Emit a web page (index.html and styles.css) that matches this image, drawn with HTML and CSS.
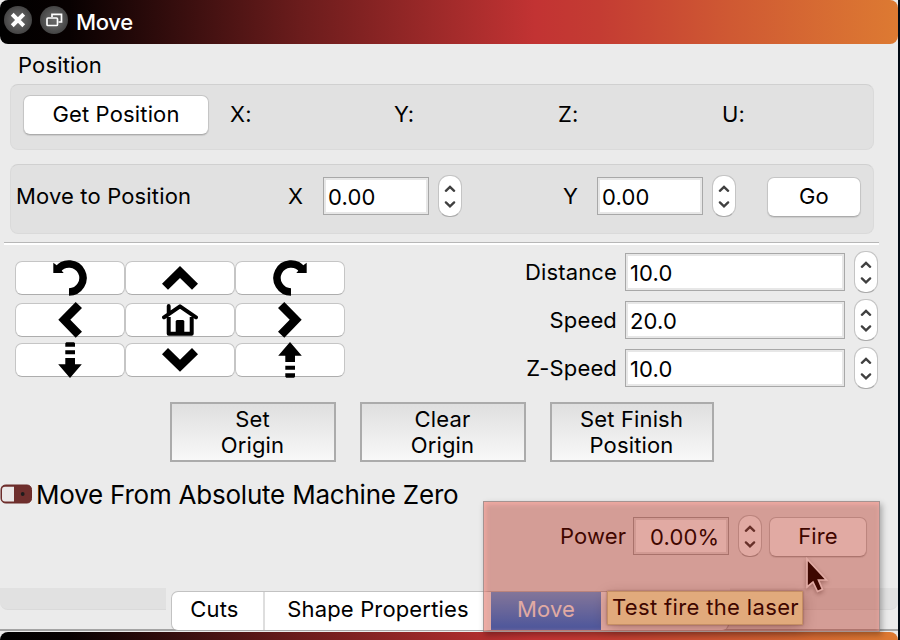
FILE: index.html
```html
<!DOCTYPE html>
<html lang="en">
<head>
<meta charset="utf-8">
<title>Move</title>
<link rel="stylesheet" href="styles.css">
</head>
<body>
<svg class="defs" width="0" height="0">
  <symbol id="spin" viewBox="0 0 24 42"><path d="M7.500 15.300 L12 11 L16.500 15.300 M7.500 28 L12 32.300 L16.500 28" fill="none" stroke="#404040" stroke-width="2.600" stroke-linecap="round" stroke-linejoin="miter"/></symbol>
</svg>
<div class="window">
  <header class="titlebar">
    <span class="round"><svg width="28" height="28" viewBox="0 0 28 28"><path d="M9 9 L19 19 M19 9 L9 19" stroke="#fff" stroke-width="4.600" stroke-linecap="square" transform="translate(1.800 1.800) scale(.87)"/></svg></span>
    <span class="round"><svg width="28" height="28" viewBox="0 0 28 28" fill="none" stroke="#fff" stroke-width="1.700"><path d="M12 11 V8.300 H21.500 V16 H18.500"/><rect x="7" y="12" width="10.500" height="7.500" rx="1"/></svg></span>
    <h1 class="title">Move</h1>
  </header>

  <main class="content">
    <h2 class="section-label">Position</h2>
    <section class="group readout">
      <button class="btn get">Get Position</button>
      <span class="axis">X:</span><span class="axis">Y:</span><span class="axis">Z:</span><span class="axis">U:</span>
    </section>
    <section class="group goto">
      <span class="goto-label">Move to Position</span>
      <span class="goto-x">X</span>
      <span class="field short">0.00</span>
      <svg class="spin"><use href="#spin"/></svg>
      <span class="goto-y">Y</span>
      <span class="field short">0.00</span>
      <svg class="spin"><use href="#spin"/></svg>
      <button class="btn go">Go</button>
    </section>
    <div class="divider"></div>

    <section class="jog">
      <div class="pad">
        <button class="key"><svg viewBox="0 0 36 36"><path d="M17 32 A14 14 0 1 0 5.700 9.700" fill="none" stroke="#000" stroke-width="7.500"/><path d="M1.300 2.700 L5 5.500 L11.700 13 H1.300Z"/></svg></button>
        <button class="key"><svg viewBox="0 0 36 36"><path d="M18 6 L36 23.700 L30 29.700 L18 18 L6 29.700 L0 23.700Z"/></svg></button>
        <button class="key"><svg viewBox="0 0 36 36"><path d="M19 32 A14 14 0 1 1 30.300 9.700" fill="none" stroke="#000" stroke-width="7.500"/><path d="M34.700 2.700 L31 5.500 L24.300 13 H34.700Z"/></svg></button>
        <button class="key"><svg viewBox="0 0 36 36"><path d="M6.300 17.800 L23.700 0 L30 6 L18.300 17.800 L30 29.700 L23.700 35.700Z"/></svg></button>
        <button class="key"><svg viewBox="0 0 36 36"><path d="M6.700 15 V31.700 H29.700 V15" fill="none" stroke="#000" stroke-width="4" stroke-linejoin="round"/><path d="M2 15.300 L18 4.300 L34 15.300 M6.700 12 V4" fill="none" stroke="#000" stroke-width="3.900" stroke-linecap="round" stroke-linejoin="round"/><path d="M13.700 32 V19.500 Q13.700 18 15.200 18 H20.800 Q22.300 18 22.300 19.500 V32Z"/></svg></button>
        <button class="key"><svg viewBox="0 0 36 36"><path d="M29.700 17.800 L12.300 0 L6 6 L17.700 17.800 L6 29.700 L12.300 35.700Z"/></svg></button>
        <button class="key"><svg viewBox="0 0 36 36"><path d="M14.300 .3 H22 L23 1.300 V4.700 H13.300 V1.300Z M13.300 8.300 H23 V12.300 H13.300Z M13.300 16 H23 V22.300 H29.800 L18 36 L6.200 22.300 H13.300Z"/></svg></button>
        <button class="key"><svg viewBox="0 0 36 36"><path d="M18 29.700 L36 12.300 L30 6 L18 17.700 L6 6 L0 12.300Z"/></svg></button>
        <button class="key"><svg viewBox="0 0 36 36"><path d="M14.300 35.700 H22 L23 34.700 V31.300 H13.300 V34.700Z M13.300 27.700 H23 V23.700 H13.300Z M13.300 20 H23 V13.700 H29.800 L18 0 L6.200 13.700 H13.300Z"/></svg></button>
      </div>
      <div class="params">
        <label>Distance</label><span class="field">10.0</span><svg class="spin"><use href="#spin"/></svg>
        <label>Speed</label><span class="field">20.0</span><svg class="spin"><use href="#spin"/></svg>
        <label>Z-Speed</label><span class="field">10.0</span><svg class="spin"><use href="#spin"/></svg>
      </div>
    </section>

    <section class="origins">
      <button class="flat">Set<br>Origin</button>
      <button class="flat">Clear<br>Origin</button>
      <button class="flat last">Set Finish<br>Position</button>
    </section>

    <div class="absolute-row">
      <svg width="33" height="20" viewBox="0 0 33 20"><rect x="1" y="1" width="30.500" height="18" rx="4.500" fill="#6f2f2d" stroke="#6b2a28" stroke-width="1"/><path d="M5 2.800 H14 V17.500 H5 Q2 17.500 2 14.500 V5.800 Q2 2.800 5 2.800Z" fill="#ebe8e8"/><circle cx="22.700" cy="10" r="1.900" fill="#1c1c1c"/></svg>
      <span>Move From Absolute Machine Zero</span>
    </div>

    <div class="fire-row">
      <span class="power">Power</span>
      <span class="field percent">0.00%</span>
      <svg class="spin"><use href="#spin"/></svg>
      <button class="btn fire">Fire</button>
    </div>
  </main>

  <nav class="dock">
    <span class="stub left"></span>
    <div class="tabs">
      <span class="tab cuts">Cuts</span><span class="tab shapes">Shape Properties</span><span class="tab active">Move</span>
    </div>
    <span class="stub right"></span>
  </nav>
  <footer class="titlebar next"><span class="round"></span><span class="round"></span></footer>

  <div class="tooltip">Test fire the laser</div>
  <svg class="cursor" width="24" height="38" viewBox="0 0 24 38"><path d="M2 2 V30 L8 25 L12.500 34.500 L17.500 32.300 L13.500 23 H21.500Z" fill="#000" stroke="#fff" stroke-width="1.700"/></svg>
  <div class="highlight"></div>
</div>
</body>
</html>
```
FILE: styles.css
```css
* { box-sizing: border-box; }
body {
  margin: 0;
  width: 900px;
  height: 640px;
  overflow: hidden;
  background: #000a14;
  font-family: Inter, "Liberation Sans", sans-serif;
  font-size: 22px;
  letter-spacing: .15px;
  color: #000;
}
.defs { position: absolute; }
.window {
  position: relative;
  width: 898px;
  height: 640px;
  overflow: hidden;
  background: #ebebeb;
  display: flex;
  flex-direction: column;
}
.titlebar {
  flex: none;
  height: 44px;
  padding: 0 4px 4px;
  display: flex;
  align-items: center;
  gap: 8px;
  border-radius: 8px;
  background: linear-gradient(90deg, #000 0, #080101 70px, #6b1c1c 300px, #c23333 535px, #c43c33 600px, #cf5933 730px, #dd7a32 898px);
}
.round {
  width: 28px;
  height: 28px;
  border-radius: 50%;
  background: radial-gradient(circle, #686868 0, #585858 40%, #3b3b3b 85%, #2a2a2a 100%);
}
.round svg { display: block; }
.title {
  margin: 4px 0 0;
  font-size: 22px;
  font-weight: 500;
  letter-spacing: -.3px;
  color: #fff;
}
.content { flex: none; height: 544px; }
.section-label {
  margin: 0;
  height: 40px;
  padding: 8px 0 0 18px;
  font-size: 22px;
  line-height: 27px;
  font-weight: 400;
}
.group {
  width: 864px;
  margin-left: 10px;
  display: flex;
  border: 1px solid #dadada;
  border-top-color: #d0d0d0;
  border-radius: 8px;
  background: #e1e1e1;
}
.readout { height: 66px; padding: 10px 0 0 12px; }
.btn {
  flex: none;
  height: 40px;
  padding: 0 0 2px;
  border: 1px solid #c5c5c5;
  border-bottom-color: #acacac;
  border-radius: 7px;
  background: #fff;
  box-shadow: 0 1px 1px #0000001a;
  font: inherit;
  letter-spacing: inherit;
  color: inherit;
}
.get { width: 186px; margin-right: 21px; }
.axis { flex: none; width: 164px; line-height: 38px; }
.axis:last-child { width: 60px; }
.goto { height: 70px; margin-top: 14px; padding-left: 5px; }
.goto > span { line-height: 63px; }
.goto-label { width: 272px; }
.goto-x { width: 35px; }
.goto-y { width: 34px; margin-left: 101px; }
.field {
  height: 38px;
  padding-left: 4px;
  border: 1px solid #a8a8a8;
  background: #fff;
  box-shadow: inset 0 0 0 2px #e7e7e7;
  line-height: 38px;
  white-space: nowrap;
}
.goto .short { width: 106px; margin-top: 12px; line-height: 38px; }
.spin {
  flex: none;
  width: 24px;
  height: 42px;
  border: 1px solid #c4c4c4;
  border-bottom-color: #aaa;
  border-radius: 11px;
  background: #fff;
}
.goto .spin { margin: 10px 0 0 9px; }
.go { width: 94px; margin: 12px 0 0 31px; }
.divider {
  width: 875px;
  height: 3px;
  margin: 8px 0 0 4px;
  border-top: 1px solid #b7b7b7;
  background: #fff;
}
.jog { display: flex; height: 157px; }
.pad {
  display: grid;
  grid-template-columns: repeat(3, 110px);
  grid-template-rows: 42px 40px 34px;
  align-items: start;
  margin: 16px 0 0 15px;
}
.key {
  display: flex;
  align-items: center;
  justify-content: center;
  height: 34px;
  padding: 0;
  border: 1px solid #c5c5c5;
  border-bottom-color: #adadad;
  border-radius: 7px;
  background: #fff;
}
.key svg { flex: none; width: 36px; height: 36px; }
.params {
  display: grid;
  grid-template-columns: 100px 220px 24px;
  grid-auto-rows: 42px;
  gap: 6px 9px;
  margin: 6px 0 0 171px;
  align-items: center;
}
.params label { text-align: right; margin-right: -1px; padding-bottom: 1px; }
.origins { display: flex; gap: 24px; margin-left: 170px; }
.flat {
  width: 166px;
  height: 60px;
  padding: 0 1px 1px 0;
  border: 2px solid #ababab;
  background: linear-gradient(#dfdfdf, #f8f8f8);
  font: inherit;
  line-height: 26px;
  letter-spacing: inherit;
  color: inherit;
}
.flat.last { width: 164px; }
.absolute-row {
  display: flex;
  align-items: center;
  gap: 3px;
  height: 32px;
  margin-top: 16px;
  font-size: 26px;
  letter-spacing: -.22px;
  white-space: nowrap;
}
.fire-row { display: flex; margin: 5px 0 0 560px; }
.power { width: 73px; line-height: 43px; }
.percent { width: 96px; margin-top: 2px; padding-left: 16px; }
.fire-row .spin { margin-left: 9px; }
.fire { width: 98px; margin: 2px 0 0 7px; }
.dock {
  position: relative;
  flex: none;
  display: flex;
  align-items: flex-start;
  height: 44px;
}
.dock::after {
  content: "";
  position: absolute;
  left: 0;
  right: 0;
  bottom: 1px;
  height: 2px;
  background: #a3a3a3;
}
.stub { height: 22px; background: #e1e1e1; border-bottom: 1px solid #dadada; }
.stub.left { width: 166px; border-radius: 0 0 0 8px; }
.stub.right { width: 168px; border-radius: 0 0 8px 0; }
.tabs {
  position: relative;
  z-index: 1;
  display: flex;
  width: 558px;
  height: 40px;
  margin: 3px 1px 0 5px;
  border: 1px solid #c2c2c2;
  border-bottom-color: #a7a7a7;
  border-radius: 7px;
  background: #fff;
  overflow: hidden;
}
.tab { line-height: 35px; text-align: center; white-space: nowrap; }
.cuts { width: 93px; padding-right: 6px; border-right: 2px solid #dedede; }
.shapes { width: 226px; }
.active { width: 110px; color: #fff; background: linear-gradient(#6dadf0, #167bf2); }
.titlebar.next { padding: 2px 4px; }
.tooltip {
  position: absolute;
  z-index: 3;
  left: 607px;
  top: 591px;
  width: 196px;
  height: 34px;
  padding-left: 4px;
  border: 1px solid #d3d39c;
  background: #ffffc3;
  box-shadow: 0 4px 14px #0000004d, 0 0 2px #00000066;
  line-height: 31px;
  letter-spacing: .35px;
  white-space: nowrap;
}
.cursor {
  position: absolute;
  z-index: 4;
  left: 805px;
  top: 557px;
  filter: drop-shadow(0 2px 2px #0005);
}
.highlight {
  position: absolute;
  z-index: 5;
  left: 483px;
  top: 501px;
  width: 397px;
  height: 131px;
  border: 1px solid #8d8f8faa;
  background: rgba(172, 20, 0, .36);
  box-shadow: inset 0 3px 4px #ffb0a888, inset 3px 0 4px #ffb0a866, 2px 3px 6px #0000004d;
}
```
